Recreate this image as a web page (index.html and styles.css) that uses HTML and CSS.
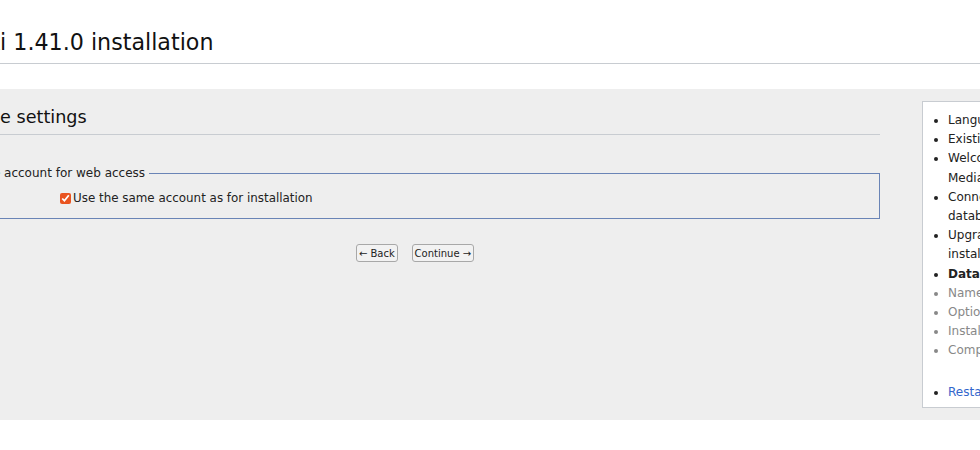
FILE: index.html
```html
<!DOCTYPE html>
<html>
  <head>
    <title>MediaWiki 1.41.0 installation</title>
    <link rel="stylesheet" href="styles.css">
  </head>
  <body>
    <div class="page">
      <h1 class="page-title">MediaWiki 1.41.0 installation</h1>

      <div class="band">
        <div class="main">
          <h2 class="step-title">Database settings</h2>

          <form action="">
            <fieldset class="account">
              <legend>Database account for web access</legend>
              <div class="check-row">
                <input type="checkbox" id="same-account" checked>
                <label for="same-account">Use the same account as for installation</label>
              </div>
            </fieldset>

            <div class="submit">
              <button type="button" class="btn">&larr; Back</button>
              <button type="button" class="btn">Continue &rarr;</button>
            </div>
          </form>
        </div>

        <div class="steps">
          <ul class="step-list">
            <li>Language</li>
            <li>Existing wiki</li>
            <li>Welcome to MediaWiki!</li>
            <li>Connect to database</li>
            <li>Upgrade existing installation</li>
            <li class="current">Database settings</li>
            <li class="todo">Name</li>
            <li class="todo">Options</li>
            <li class="todo">Install</li>
            <li class="todo">Complete!</li>
          </ul>
          <ul class="step-list restart">
            <li><a href="#">Restart installation</a></li>
          </ul>
        </div>
      </div>
    </div>
  </body>
</html>
```

FILE: styles.css
```css
body { margin: 0; overflow: hidden; background: #fff; color: #222; font-family: "DejaVu Sans", sans-serif; font-size: 12px; }

/* the window is scrolled sideways, so the page starts left of the viewport */
.page { margin-left: -130px; width: 1400px; }

.page-title {
  margin: 0;
  padding: 28px 0 7px 23px;
  font-size: 22.2px;
  line-height: 28px;
  font-weight: normal;
  color: #111;
  border-bottom: 1px solid #c8ccd1;
}

.band { display: flex; align-items: flex-start; margin-top: 25px; background: #eee; }

.main { width: 1010px; padding-top: 16px; }

.step-title {
  margin: 0;
  padding: 0 0 5px 57px;
  font-size: 17.6px;
  line-height: 24px;
  font-weight: normal;
  color: #111;
  border-bottom: 1px solid #c8ccd1;
}

.account {
  margin: 30px 0 0 60px;
  padding: 0 8px 12px;
  border: 1px solid #6a84b6;
}
.account legend { padding: 0 4px; font-size: 12px; line-height: 16px; }

.check-row { display: flex; align-items: center; margin-top: 9px; padding-left: 117px; line-height: 16px; font-size: 11.9px; }
.check-row input { margin: 0 2px 0 4px; width: 11px; height: 11px; accent-color: #e95420; }

.submit { margin-top: 25px; padding-left: 80px; text-align: center; }
.btn {
  height: 18px;
  margin: 0 5px;
  padding: 0 2px;
  font-family: "DejaVu Sans", sans-serif;
  font-size: 10px;
  color: #222;
  background: #f2f2f2;
  border: 1px solid #a8a8a8;
  border-radius: 3px;
}

.steps {
  margin: 12px 0 12px 42px;
  padding: 9px 0 5px;
  width: 170px;
  background: #fff;
  border: 1px solid #c8ccd1;
}
.step-list { margin: 0; padding-left: 25px; width: 124px; line-height: 19.2px; }
.step-list .current { font-weight: bold; }
.step-list .todo { color: #888; }
.restart { margin-top: 22px; }
.restart a { color: #36c; text-decoration: none; }
```
